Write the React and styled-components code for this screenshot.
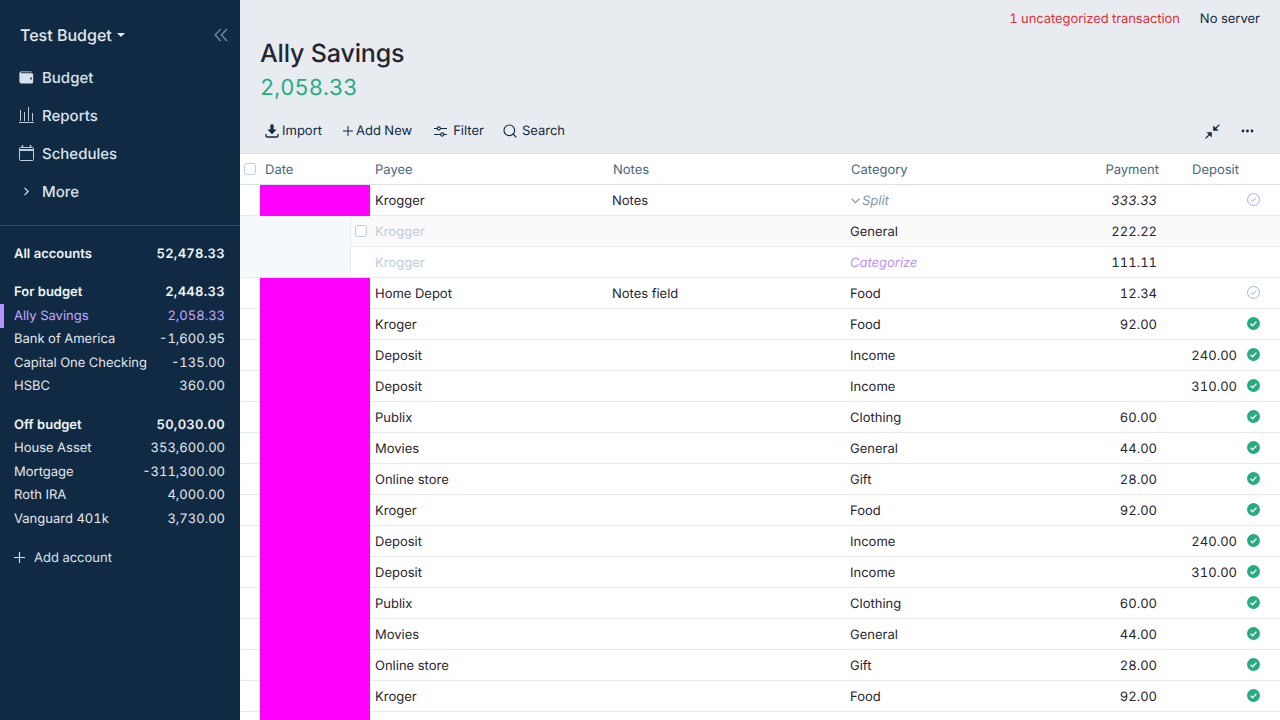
import React from "react";
import styled, { createGlobalStyle } from "styled-components";
import { Search } from "lucide-react";

const GlobalStyle = createGlobalStyle`
  html, body {
    margin: 0;
    height: 100%;
    overflow: hidden;
  }
  body {
    font-family: "Inter", "Liberation Sans", sans-serif;
    font-size: 13px;
    font-feature-settings: "tnum";
    text-rendering: geometricPrecision;
    color: #272630;
  }
  * {
    box-sizing: border-box;
  }
`;

const Page = styled.div`
  display: flex;
  width: 1280px;
  height: 720px;
  overflow: hidden;
`;

/* sidebar */
const Sidebar = styled.aside`
  width: 240px;
  flex: none;
  background: #102a43;
  color: #e4e7eb;
  display: flex;
  flex-direction: column;
`;

const BudgetHeader = styled.div`
  height: 58px;
  padding: 12px 12px 0 20px;
  display: flex;
  align-items: center;
  justify-content: space-between;
`;

const BudgetName = styled.div`
  display: flex;
  align-items: center;
  gap: 5px;
  font-size: 16px;
  font-weight: 500;
  color: #e4e7eb;
`;

const Caret = styled.span`
  width: 0;
  height: 0;
  border-left: 4px solid transparent;
  border-right: 4px solid transparent;
  border-top: 4px solid #e4e7eb;
`;

const Nav = styled.nav`
  display: flex;
  flex-direction: column;
  padding-bottom: 15px;
  border-bottom: 1px solid #334e68;
`;

const NavItem = styled.div`
  height: 38px;
  padding-left: 19px;
  display: flex;
  align-items: center;
  gap: 8px;
  font-size: 15px;
  font-weight: 500;
  color: #d9e2ec;
`;

const NavIcon = styled.span`
  width: 15px;
  height: 15px;
  display: flex;
  align-items: center;
  justify-content: center;
`;

const Accounts = styled.div`
  padding-top: 16px;
  display: flex;
  flex-direction: column;
`;

const AccountRow = styled.div`
  height: 23.5px;
  padding: 0 15px 0 14px;
  display: flex;
  align-items: center;
  justify-content: space-between;
  font-size: 13px;
  font-weight: ${(p) => (p.$bold ? 600 : 400)};
  color: ${(p) => (p.$active ? "#c6a6ff" : p.$bold ? "#f0f4f8" : "#e4e7eb")};
  margin-top: ${(p) => p.$gap || 0}px;
  position: relative;

  ${(p) =>
    p.$active &&
    `&::before {
      content: "";
      position: absolute;
      left: 0;
      top: 0;
      bottom: 0;
      width: 4px;
      background: #b990ff;
    }`}
`;

const AccountAmount = styled.span`
  letter-spacing: ${(p) => (p.$bold ? "0.3px" : "0")};
`;

const AddAccount = styled.div`
  margin-top: 15px;
  padding-left: 14px;
  display: flex;
  align-items: center;
  gap: 9px;
  height: 24px;
  color: #d9e2ec;
  font-size: 13px;
`;

/* main */
const Main = styled.main`
  flex: 1;
  min-width: 0;
  background: #e8ecf0;
  display: flex;
  flex-direction: column;
`;

const TopBar = styled.div`
  height: 37px;
  padding: 0 20px;
  display: flex;
  align-items: center;
  justify-content: flex-end;
  gap: 20px;
  font-size: 13px;
  color: #102a43;
`;

const Warning = styled.span`
  color: #e12d39;
  letter-spacing: -0.07px;
`;

const Header = styled.div`
  padding: 0 20px;
`;

const Title = styled.h1`
  margin: 0;
  height: 35px;
  line-height: 35px;
  font-size: 25px;
  font-weight: 500;
  letter-spacing: -0.15px;
  color: #272630;
`;

const Balance = styled.div`
  height: 33px;
  line-height: 33px;
  font-size: 22px;
  font-weight: 400;
  color: #27ab83;
`;

const Toolbar = styled.div`
  height: 48px;
  padding: 4px 26px 0 25px;
  display: flex;
  align-items: center;
  justify-content: space-between;
  font-size: 13px;
  color: #102a43;
`;

const ToolGroup = styled.div`
  display: flex;
  align-items: center;
  gap: ${(p) => p.$gap}px;
`;

const ToolButton = styled.div`
  display: flex;
  align-items: center;
  gap: ${(p) => p.$gap || 4}px;
  margin-left: ${(p) => p.$left || 0}px;
`;

const Table = styled.div`
  flex: 1;
  min-height: 0;
  background: #fff;
  border-top: 1px solid #d9e2ec;
  overflow: hidden;
`;

const RowGrid = styled.div`
  display: grid;
  grid-template-columns: 20px 110px 238px 238px 238px 78px 80px 38px;
  height: 31px;
  align-items: center;
  position: relative;
  border-bottom: 1px solid ${(p) => (p.$head ? "#d9e2ec" : "#e8ecf0")};
  background: ${(p) => (p.$tint ? "#fafafa" : "#fff")};
  color: #272630;
`;

const HeadCell = styled.div`
  padding-top: 2px;
  padding-left: 5px;
  color: #486581;
  text-align: ${(p) => (p.$right ? "right" : "left")};
  padding-right: ${(p) => (p.$right ? p.$pad : 0)}px;
`;

const Check = styled.div`
  width: 12px;
  height: 12px;
  border: 1px solid #bcccdc;
  border-radius: 3px;
  background: #fff;
  margin-left: ${(p) => p.$left || 0}px;
`;

const DateCell = styled.div`
  position: absolute;
  left: 20px;
  top: 0;
  width: 110px;
  height: 31px;
  background: #ff00ff;
`;

const Cell = styled.div`
  padding: 2px 5px 0 ${(p) => (p.$inset ? 4 : 5)}px;
  white-space: nowrap;
  font-style: ${(p) => (p.$italic ? "italic" : "normal")};
  color: ${(p) => p.$color || "inherit"};
  display: flex;
  align-items: center;
  gap: 2px;
  justify-content: ${(p) => (p.$right ? "flex-end" : "flex-start")};
`;

const Cleared = styled.div`
  padding: 0 0 1px 5px;
  display: flex;
  align-items: center;
`;

const ChildGutter = styled.div`
  position: absolute;
  left: 0;
  top: 0;
  width: 130px;
  height: 31px;
  display: flex;
`;

const ChildPad = styled.div`
  width: 111px;
  height: ${(p) => (p.$last ? 30 : 31)}px;
  background: #f5f9fc;
  border-right: 1px solid #e8ecf0;
`;

const ChildCheck = styled.div`
  flex: 1;
  height: 30px;
  display: flex;
  align-items: center;
  padding-left: 4px;
`;

const GutterSpace = styled.span`
  grid-column: 1 / span 2;
`;

const WalletIcon = () => (
  <svg width="15" height="13" viewBox="0 0 15 13">
    <path d="M.4 2.2C.4 1 1.4.4 2.4.4h9.6c.7 0 1 .4 1 .9H2.4c-.6 0-1 .2-1 .5s.4.5 1 .5h10.2c1 0 1.6.6 1.6 1.5v7c0 1-.7 1.6-1.6 1.6H2.2C1.1 12.4.4 11.7.4 10.6z" fill="#d9e2ec" />
    <circle cx="12" cy="7.4" r="1" fill="#102a43" />
  </svg>
);

const ReportsIcon = () => (
  <svg width="15" height="16" viewBox="0 0 15 16" fill="none" stroke="#bcccdc" strokeWidth="1">
    <path d="M0 15.5h15M1.5 14V3M5.5 14V5M9.5 14V0M13.5 14V6" />
  </svg>
);

const CalendarIcon = () => (
  <svg width="15" height="16" viewBox="0 0 15 16" fill="none" stroke="#bcccdc" strokeWidth="1">
    <rect x=".5" y="2.5" width="14" height="13" rx="1" />
    <path d="M.5 5h14" strokeWidth="2" />
    <path d="M3.5 0v3M11.5 0v3" strokeWidth="1.5" />
  </svg>
);

const MoreChevron = () => (
  <svg width="7" height="9" viewBox="0 0 7 9" fill="none" stroke="#d9e2ec" strokeWidth="1.2">
    <path d="M1.5.8 5.2 4.5 1.5 8.2" />
  </svg>
);

const SplitChevron = () => (
  <svg width="9" height="6" viewBox="0 0 9 6" fill="none" stroke="#829ab1" strokeWidth="1.3">
    <path d="M.6.8 4.5 4.7 8.4.8" />
  </svg>
);

const PlusIcon = ({ size }) => (
  <svg width={size} height={size} viewBox="0 0 11 11" fill="none" stroke="currentColor" strokeWidth="1.1">
    <path d="M5.5 0v11M0 5.5h11" />
  </svg>
);

const CollapseIcon = () => (
  <svg width="14" height="14" viewBox="0 0 14 14" fill="none" stroke="#627d98" strokeWidth="1.8">
    <path d="M6.8 1 1.2 7l5.6 6M13 1 7.4 7 13 13" />
  </svg>
);

const ImportIcon = () => (
  <svg width="14" height="14" viewBox="0 0 14 14" fill="none">
    <path d="M5.4.5h3.2v5h3L7 10.2 2.4 5.5h3z" fill="#102a43" />
    <path d="M1 10v2c0 .7.4 1 1 1h10c.6 0 1-.3 1-1v-2" stroke="#102a43" strokeWidth="1.3" />
  </svg>
);

const FilterIcon = () => (
  <svg width="13" height="11" viewBox="0 0 13 11" fill="none" stroke="#102a43" strokeWidth="1.1">
    <path d="M0 2.5h3.2M6.4 2.5H13M0 8.5h6.6M9.8 8.5H13" />
    <circle cx="4.8" cy="2.5" r="1.6" />
    <circle cx="8.2" cy="8.5" r="1.6" />
  </svg>
);

const ShrinkIcon = () => (
  <svg width="15" height="15" viewBox="0 0 15 15" fill="none">
    <path d="M14.4.6 10 5" stroke="#102a43" strokeWidth="1.3" />
    <path d="M8.2 1.4v5.4h5.4z" fill="#102a43" />
    <path d="M.6 14.4 5 10" stroke="#102a43" strokeWidth="1.3" />
    <path d="M1.4 8.2h5.4v5.4z" fill="#102a43" />
  </svg>
);

const DotsIcon = () => (
  <svg width="13" height="4" viewBox="0 0 13 4" fill="#102a43">
    <circle cx="2" cy="2" r="1.4" />
    <circle cx="6.5" cy="2" r="1.4" />
    <circle cx="11" cy="2" r="1.4" />
  </svg>
);

const CheckIcon = ({ done }) =>
  done ? (
    <svg width="13" height="13" viewBox="0 0 13 13">
      <circle cx="6.5" cy="6.5" r="6.5" fill="#27ab83" />
      <path d="M3.6 6.8 5.6 8.8 9.4 4.6" fill="none" stroke="#fff" strokeWidth="1.4" />
    </svg>
  ) : (
    <svg width="13" height="13" viewBox="0 0 13 13" fill="none" stroke="#9fb3d0">
      <circle cx="6.5" cy="6.5" r="6" />
      <path d="M3.8 6.8 5.6 8.6 9.2 4.6" />
    </svg>
  );

const accounts = [
  { name: "All accounts", amount: "52,478.33", bold: true },
  { name: "For budget", amount: "2,448.33", bold: true, gap: 15 },
  { name: "Ally Savings", amount: "2,058.33", active: true },
  { name: "Bank of America", amount: "-1,600.95" },
  { name: "Capital One Checking", amount: "-135.00" },
  { name: "HSBC", amount: "360.00" },
  { name: "Off budget", amount: "50,030.00", bold: true, gap: 15 },
  { name: "House Asset", amount: "353,600.00" },
  { name: "Mortgage", amount: "-311,300.00" },
  { name: "Roth IRA", amount: "4,000.00" },
  { name: "Vanguard 401k", amount: "3,730.00" },
];

const transactions = [
  { payee: "Home Depot", notes: "Notes field", category: "Food", payment: "12.34" },
  { payee: "Kroger", category: "Food", payment: "92.00", done: true },
  { payee: "Deposit", category: "Income", deposit: "240.00", done: true },
  { payee: "Deposit", category: "Income", deposit: "310.00", done: true },
  { payee: "Publix", category: "Clothing", payment: "60.00", done: true },
  { payee: "Movies", category: "General", payment: "44.00", done: true },
  { payee: "Online store", category: "Gift", payment: "28.00", done: true },
  { payee: "Kroger", category: "Food", payment: "92.00", done: true },
  { payee: "Deposit", category: "Income", deposit: "240.00", done: true },
  { payee: "Deposit", category: "Income", deposit: "310.00", done: true },
  { payee: "Publix", category: "Clothing", payment: "60.00", done: true },
  { payee: "Movies", category: "General", payment: "44.00", done: true },
  { payee: "Online store", category: "Gift", payment: "28.00", done: true },
  { payee: "Kroger", category: "Food", payment: "92.00", done: true },
];

const navItems = [
  { label: "Budget", icon: <WalletIcon /> },
  { label: "Reports", icon: <ReportsIcon /> },
  { label: "Schedules", icon: <CalendarIcon /> },
  { label: "More", icon: <MoreChevron /> },
];

function App() {
  return (
    <Page>
      <GlobalStyle />
      <Sidebar>
        <BudgetHeader>
          <BudgetName>
            Test Budget <Caret />
          </BudgetName>
          <CollapseIcon />
        </BudgetHeader>
        <Nav>
          {navItems.map((item) => (
            <NavItem key={item.label}>
              <NavIcon>{item.icon}</NavIcon>
              {item.label}
            </NavItem>
          ))}
        </Nav>
        <Accounts>
          {accounts.map((a) => (
            <AccountRow key={a.name} $bold={a.bold} $active={a.active} $gap={a.gap}>
              <span>{a.name}</span>
              <AccountAmount $bold={a.bold}>{a.amount}</AccountAmount>
            </AccountRow>
          ))}
          <AddAccount>
            <PlusIcon size={11} />
            Add account
          </AddAccount>
        </Accounts>
      </Sidebar>
      <Main>
        <TopBar>
          <Warning>1 uncategorized transaction</Warning>
          <span>No server</span>
        </TopBar>
        <Header>
          <Title>Ally Savings</Title>
          <Balance>2,058.33</Balance>
        </Header>
        <Toolbar>
          <ToolGroup $gap={20}>
            <ToolButton $gap={3}>
              <ImportIcon /> Import
            </ToolButton>
            <ToolButton $gap={3} $left={1}>
              <PlusIcon size={10} /> Add New
            </ToolButton>
            <ToolButton $gap={6} $left={2}>
              <FilterIcon /> Filter
            </ToolButton>
            <ToolButton $gap={4} $left={-2}>
              <Search size={16} strokeWidth={1.7} /> Search
            </ToolButton>
          </ToolGroup>
          <ToolGroup $gap={21}>
            <ShrinkIcon />
            <DotsIcon />
          </ToolGroup>
        </Toolbar>
        <Table>
          <RowGrid $head>
            <Check $left={4} />
            <HeadCell>Date</HeadCell>
            <HeadCell>Payee</HeadCell>
            <HeadCell>Notes</HeadCell>
            <HeadCell>Category</HeadCell>
            <HeadCell $right $pad={3}>Payment</HeadCell>
            <HeadCell $right $pad={3}>Deposit</HeadCell>
            <span />
          </RowGrid>
          <RowGrid>
            <DateCell />
            <GutterSpace />
            <Cell>Krogger</Cell>
            <Cell $inset>Notes</Cell>
            <Cell $italic $color="#829ab1">
              <SplitChevron />
              Split
            </Cell>
            <Cell $right $italic>333.33</Cell>
            <span />
            <Cleared>
              <CheckIcon />
            </Cleared>
          </RowGrid>
          <RowGrid $tint>
            <ChildGutter>
              <ChildPad />
              <ChildCheck>
                <Check />
              </ChildCheck>
            </ChildGutter>
            <GutterSpace />
            <Cell $color="#bcccdc">Krogger</Cell>
            <span />
            <Cell $inset>General</Cell>
            <Cell $right>222.22</Cell>
            <span />
            <span />
          </RowGrid>
          <RowGrid>
            <ChildGutter>
              <ChildPad $last />
            </ChildGutter>
            <GutterSpace />
            <Cell $color="#bcccdc">Krogger</Cell>
            <span />
            <Cell $inset $italic $color="#b990ff">Categorize</Cell>
            <Cell $right>111.11</Cell>
            <span />
            <span />
          </RowGrid>
          {transactions.map((t, i) => (
            <RowGrid key={i}>
              <DateCell />
              <GutterSpace />
              <Cell>{t.payee}</Cell>
              <Cell $inset>{t.notes}</Cell>
              <Cell $inset>{t.category}</Cell>
              <Cell $right>{t.payment}</Cell>
              <Cell $right>{t.deposit}</Cell>
              <Cleared>
                <CheckIcon done={t.done} />
              </Cleared>
            </RowGrid>
          ))}
          <RowGrid>
            <DateCell />
          </RowGrid>
        </Table>
      </Main>
    </Page>
  );
}

export default App;
